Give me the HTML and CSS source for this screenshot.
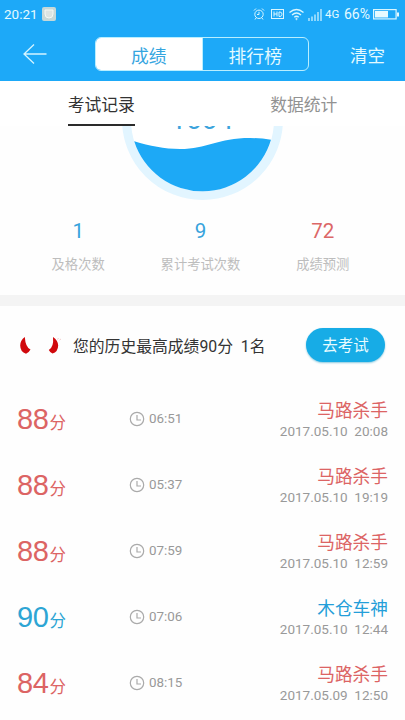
FILE: index.html
```html
<!DOCTYPE html>
<html lang="zh-CN">
<head>
<meta charset="utf-8">
<title>成绩</title>
<link rel="stylesheet" href="styles.css">
</head>
<body>
<header class="top">
  <div class="status">
    <span class="clock">20:21</span>
    <svg class="app-badge" width="14" height="14" viewBox="0 0 14 14"><rect width="14" height="14" rx="2" fill="#c6d8d8"/><path d="M3 3h8v4q0 4-4 4T3 7z" fill="#dce4e2" stroke="#f5f8f4"/></svg>
    <svg class="indicators" width="70" height="14" viewBox="0 0 70 14" fill="none" stroke="#d9f6ff">
      <circle cx="6" cy="7.300" r="4.200"/><path d="M6 4.800v2.700H4M1 3.500l2-2M9 1.500l2 2M3 11l-1 1.500M9 11l1 1.500"/>
      <rect x="18.500" y="2.500" width="12" height="9"/><path d="M21 4.500v5M21 7h3M24 4.500v5M26 5v4.500h1q2-.3 2-2.300t-2-2.200z"/>
      <path d="M36.500 5.500q7-6 14 0M39 8q4.500-4 9 0M41.300 10.300q2.200-2 4.400 0" stroke-width="1.300"/><circle cx="43.500" cy="12" r=".7"/>
      <path d="M56 11v3M59 9.500V14M62 7.500V14M65 5V14M68 2v12" stroke-width="1.200"/>
    </svg>
    <span class="net">4G</span>
    <span class="pct">66%</span>
    <svg class="battery" width="27" height="11" viewBox="0 0 27 11"><rect x=".6" y=".6" width="22.500" height="9.300" fill="none" stroke="#d9f6ff" stroke-width="1.200"/><path d="M2 2h13v6.500H2zM24 3.500h2v4h-2z" fill="#e6faff"/></svg>
  </div>
  <nav class="bar">
    <svg class="back" width="24" height="20" viewBox="0 0 24 20" fill="none" stroke="#d4f4ff" stroke-width="1.300"><path d="M23.500 10H1M11 .5L1 10l10 9.500"/></svg>
    <div class="segment"><span class="seg on">成绩</span><span class="seg">排行榜</span></div>
    <span class="clear">清空</span>
  </nav>
</header>
<div class="tabs"><div class="tab"><span class="active">考试记录</span></div><div class="tab"><span>数据统计</span></div></div>
<section class="summary">
  <svg class="gauge" width="166" height="76" viewBox="120 126 166 76">
    <circle cx="202.500" cy="119.500" r="76" fill="#fff" stroke="#e2f5ff" stroke-width="9"/>
    <text x="170.400" y="129.300" class="gauge-number">1004</text>
    <path d="M134.200 141.300C150 146 164 149 180 149C207 149 218 138 250 138Q261 138 271 139.800A71.500 71.500 0 0 1 134.200 141.300Z" fill="#1da9f6"/>
  </svg>
  <div class="stats">
    <div class="stat"><b>1</b><span>及格次数</span></div>
    <div class="stat"><b>9</b><span>累计考试次数</span></div>
    <div class="stat"><b class="red">72</b><span>成绩预测</span></div>
  </div>
</section>
<section class="best">
  <svg class="horns" width="42" height="20" viewBox="0 0 42 20" fill="#d0090d"><path d="M4.800 1Q.2 4.500 .2 9.500Q.3 16 6 17.800Q9 16.500 10.500 13.500Q5.500 11.500 4.800 1z"/><path d="M33 1Q38 4.500 38.200 9.500Q38 16 32.500 17.500Q30 16.500 28.800 14Q34 11 33 1z"/><path d="M37.500 3.500l1-1.500M39.500 4l1.500-1" stroke="#e89b9b" stroke-width=".5"/></svg>
  <p>您的历史最高成绩90分&nbsp; 1名</p>
  <span class="go">去考试</span>
</section>
<ul class="records">
  <li><div class="score red">88<small>分</small></div><div class="time"><svg width="16" height="16" viewBox="0 0 16 16"><circle cx="8" cy="8" r="6.700"/><path d="M8 4v5h4"/></svg>06:51</div><div class="info"><b class="red">马路杀手</b><span>2017.05.10&nbsp; 20:08</span></div></li>
  <li><div class="score red">88<small>分</small></div><div class="time"><svg width="16" height="16" viewBox="0 0 16 16"><circle cx="8" cy="8" r="6.700"/><path d="M8 4v5h4"/></svg>05:37</div><div class="info"><b class="red">马路杀手</b><span>2017.05.10&nbsp; 19:19</span></div></li>
  <li><div class="score red">88<small>分</small></div><div class="time"><svg width="16" height="16" viewBox="0 0 16 16"><circle cx="8" cy="8" r="6.700"/><path d="M8 4v5h4"/></svg>07:59</div><div class="info"><b class="red">马路杀手</b><span>2017.05.10&nbsp; 12:59</span></div></li>
  <li><div class="score">90<small>分</small></div><div class="time"><svg width="16" height="16" viewBox="0 0 16 16"><circle cx="8" cy="8" r="6.700"/><path d="M8 4v5h4"/></svg>07:06</div><div class="info"><b>木仓车神</b><span>2017.05.10&nbsp; 12:44</span></div></li>
  <li><div class="score red">84<small>分</small></div><div class="time"><svg width="16" height="16" viewBox="0 0 16 16"><circle cx="8" cy="8" r="6.700"/><path d="M8 4v5h4"/></svg>08:15</div><div class="info"><b class="red">马路杀手</b><span>2017.05.09&nbsp; 12:50</span></div></li>
</ul>
</body>
</html>
```
FILE: styles.css
```css
* { box-sizing: border-box; }
body { margin: 0; height: 720px; overflow: hidden; background: #fefefe; color: #333; font-family: Roboto, "Noto Sans CJK SC", sans-serif; }
b, small { font-weight: 400; }
svg { display: block; flex: none; }
.top { height: 81px; background: #1da9f8; color: #e4faff; }
.status { height: 28px; display: flex; align-items: center; padding-left: 4px; font-size: 13.500px; }
.clock { width: 33px; }
.app-badge { margin-left: 5px; }
.indicators { margin-left: 197px; }
.net { margin-left: 2px; font-size: 11.500px; width: 15px; }
.pct { width: 27px; margin-left: 4px; font-size: 14px; }
.battery { margin-left: 2px; }
.bar { height: 53px; display: flex; align-items: center; padding: 0 0 1px 23px; }
.segment { margin-left: 48px; width: 214px; height: 34px; display: flex; border: 1px solid #b9eeff; border-radius: 6px; overflow: hidden; }
.seg { flex: 1; text-align: center; font-size: 17.800px; line-height: 37px; }
.on { background: #fff; color: #35a5df; border-right: 1px solid #b9eeff; }
.clear { margin-left: 41px; font-size: 17.500px; line-height: 34px; padding-top: 4px; }
.tabs { height: 45px; display: flex; background: #fff; }
.tab { flex: 1; display: flex; justify-content: center; font-size: 16.800px; line-height: 49px; color: #929292; }
.tab .active { color: #333; border-bottom: 2px solid #2b2b2b; }
.tab span { height: 45px; }
.summary { height: 169px; }
.gauge { margin-left: 120px; }
.gauge-number { font-size: 28px; fill: #3ba3dc; }
.stats { display: flex; padding: 16px 21px 0 17px; }
.stat { flex: 1; display: flex; flex-direction: column; text-align: center; color: #bdbdbd; font-size: 13.300px; line-height: 20px; white-space: nowrap; }
.stat b { font-size: 20.500px; line-height: 26px; margin-bottom: 11px; color: #36a3dc; }
.stat b.red { color: #dc6767; }
.best { border-top: 11px solid #f4f4f4; height: 90px; padding: 0 20px; display: flex; align-items: center; }
.best p { margin: 2px 0 0 11px; font-size: 15.800px; line-height: 24px; white-space: nowrap; }
.go { margin: -1px 0 0 auto; width: 79px; height: 34px; border-radius: 17px; background: #17ace6; box-shadow: 0 1px 2px #89c9df; color: #e8fbff; text-align: center; font-size: 15.500px; line-height: 37px; }
.records { margin: 0; padding: 1px 0 0; list-style: none; }
.records li { height: 66px; display: flex; padding: 0 17px; }
.score { width: 112px; font-family: "Liberation Sans", "Noto Sans CJK SC", sans-serif; font-size: 29px; line-height: 33px; padding-top: 17px; color: #2da5d4; white-space: nowrap; letter-spacing: -.4px; }
.score small { font-size: 16.500px; margin-left: 1px; }
.time { display: flex; align-items: center; height: 65px; gap: 4px; font-size: 13.400px; color: #999; }
.time svg { fill: none; stroke: #aaa; stroke-width: 1.200; }
.info { margin-left: auto; display: flex; flex-direction: column; text-align: right; padding-top: 13px; font-size: 13.500px; color: #999; }
.info b { font-size: 17.700px; line-height: 25px; color: #249ed9; }
.info span { line-height: 18px; margin-top: -2px; }
.score.red, .info b.red { color: #dc6464; }
```
